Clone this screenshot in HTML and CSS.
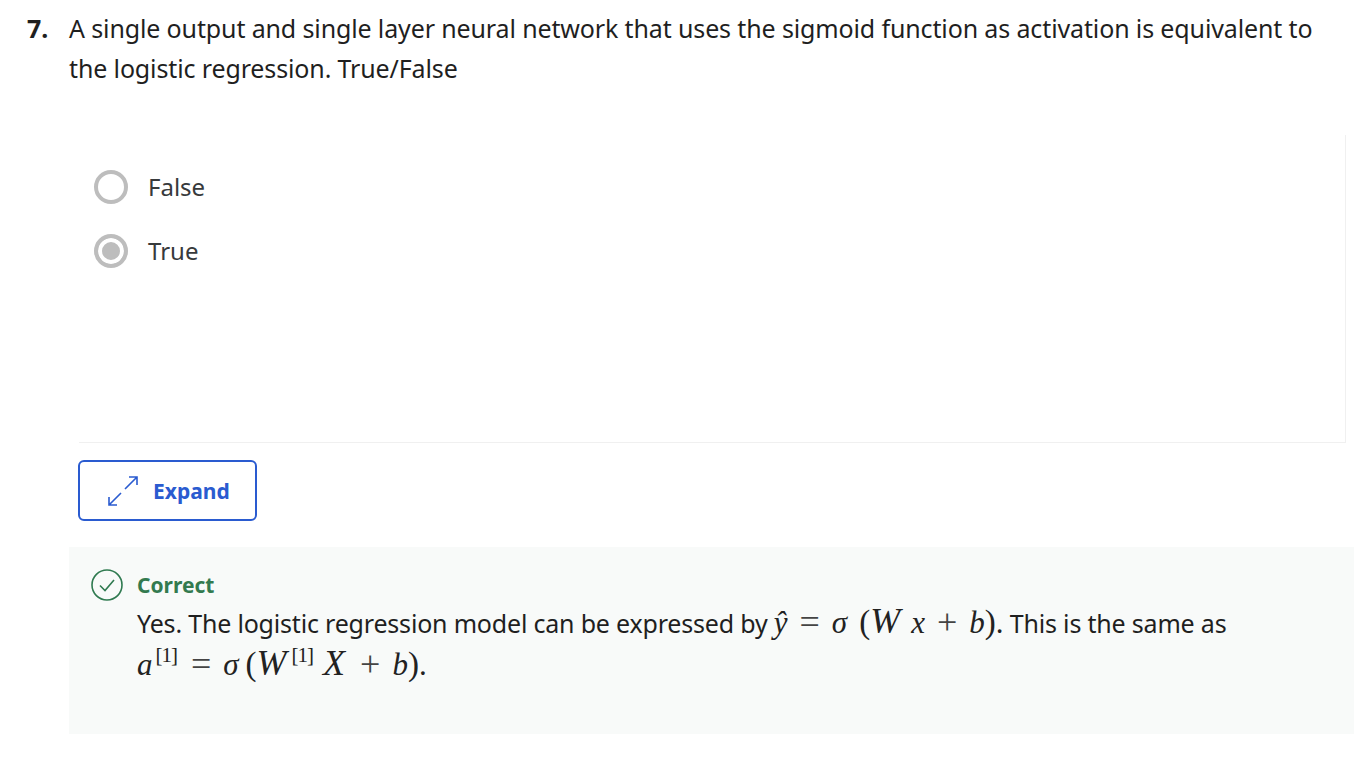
FILE: index.html
```html
<!DOCTYPE html>
<html lang="en">
<head>
  <meta charset="UTF-8">
  <title>Question 7</title>
  <link rel="stylesheet" href="styles.css">
</head>
<body>

<div class="question">
  <div class="q-number">7.</div>
  <div class="q-text">A single output and single layer neural network that uses the sigmoid function as activation is equivalent to the logistic regression. True/False</div>
</div>

<div class="options">
  <label class="option">
    <span class="radio"></span>
    <span class="option-label">False</span>
  </label>
  <label class="option">
    <span class="radio checked"></span>
    <span class="option-label">True</span>
  </label>
</div>

<button class="expand-button">
  <svg class="expand-icon" width="32" height="32" viewBox="0 0 32 32" fill="none" stroke="#2a5bd0" stroke-width="1.6">
    <path d="M18 14 L29.5 2.5 M22 2 H30 V10"/>
    <path d="M14 18 L2.5 29.5 M2 22 V30 H10"/>
  </svg>
  Expand
</button>

<div class="feedback">
  <svg class="check-icon" width="32" height="32" viewBox="0 0 32 32" fill="none" stroke="#2f7a50" stroke-width="1.6">
    <circle cx="16" cy="16" r="15"/>
    <path d="M9 16.5 L14 21.5 L23 11"/>
  </svg>
  <div class="feedback-body">
    <div class="feedback-title">Correct</div>
    <div class="feedback-text">Yes. The logistic regression model can be expressed by <span class="math"><i>ŷ</i><span class="op">=</span><i>σ</i><span class="paren open-wide">(</span><i class="big">W</i><i class="after-w">x</i><span class="op">+</span><i>b</i><span class="paren">)</span><span class="dot">.</span></span> This is the same as <span class="math"><i>a</i><sup>[1]</sup><span class="op">=</span><i>σ</i><span class="paren open-mid">(</span><i class="big">W</i><sup class="after-big">[1]</sup><i class="big after-sup">X</i><span class="op">+</span><i>b</i><span class="paren">)</span><span class="dot">.</span></span></div>
  </div>
</div>

</body>
</html>
```

FILE: styles.css
```css
body {
  margin: 0;
  background-color: #ffffff;
  font-family: "Noto Sans", sans-serif;
  color: #1f1f1f;
}
.question {
  display: flex;
  padding: 8px 0 0 27px;
  font-size: 25px;
  line-height: 40px;
}
.q-number {
  width: 42px;
  font-weight: 700;
}
.q-text {
  width: 1256px;
  letter-spacing: -0.13px;
}
.options {
  box-sizing: border-box;
  margin: 47px 8px 0 79px;
  height: 308px;
  padding-top: 19px;
  border-right: 1px solid #f0f0f0;
  border-bottom: 1px solid #f0f0f0;
}
.option {
  display: flex;
  align-items: center;
  height: 64px;
  padding-left: 15px;
}
.radio {
  box-sizing: border-box;
  width: 34px;
  height: 34px;
  margin-top: 2px;
  border: 4px solid #bdbdbd;
  border-radius: 50%;
  background-color: #ffffff;
}
.radio.checked {
  background-color: #bdbdbd;
  box-shadow: inset 0 0 0 4px #ffffff;
}
.option-label {
  margin-left: 20px;
  font-size: 24px;
  color: #373a3c;
}
.expand-button {
  display: flex;
  align-items: center;
  box-sizing: border-box;
  width: 179px;
  height: 61px;
  margin: 17px 0 0 78px;
  padding: 0 0 0 27px;
  background-color: #ffffff;
  border: 2px solid #2a5bd0;
  border-radius: 6px;
  font-family: "Noto Sans", sans-serif;
  font-size: 21px;
  font-weight: 700;
  color: #2a5bd0;
}
.expand-icon {
  margin-right: 14px;
}
.feedback {
  display: flex;
  box-sizing: border-box;
  height: 187px;
  margin: 26px 0 0 69px;
  padding: 22px 0 0 22px;
  background-color: #f8faf9;
}
.check-icon {
  flex-shrink: 0;
}
.feedback-body {
  margin-left: 14px;
  width: 1110px;
}
.feedback-title {
  margin-top: 1px;
  font-size: 21px;
  font-weight: 700;
  line-height: 31px;
  color: #337a4f;
}
.feedback-text {
  font-size: 25px;
  line-height: 40px;
  letter-spacing: -0.19px;
}
.math {
  font-family: "Liberation Serif", serif;
  font-size: 31px;
  letter-spacing: 0;
  color: #222222;
}
.math sup {
  margin: 0 2px 0 3px;
  font-size: 21px;
  letter-spacing: -1px;
  line-height: 0;
  vertical-align: 13px;
}
.math .after-big {
  margin-left: 5px;
}
.math .op {
  margin: 0 12px;
  font-size: 36px;
  font-weight: 400;
  vertical-align: -1px;
  color: #444444;
}
.math .big {
  font-size: 36px;
}
.math .open-wide {
  margin-left: 12px;
}
.math .open-mid {
  margin-left: 7px;
}
.math .after-w {
  margin-left: 11px;
}
.math .after-sup {
  margin: 0 3px 0 8px;
}
.math .paren {
  font-size: 33px;
}
```
